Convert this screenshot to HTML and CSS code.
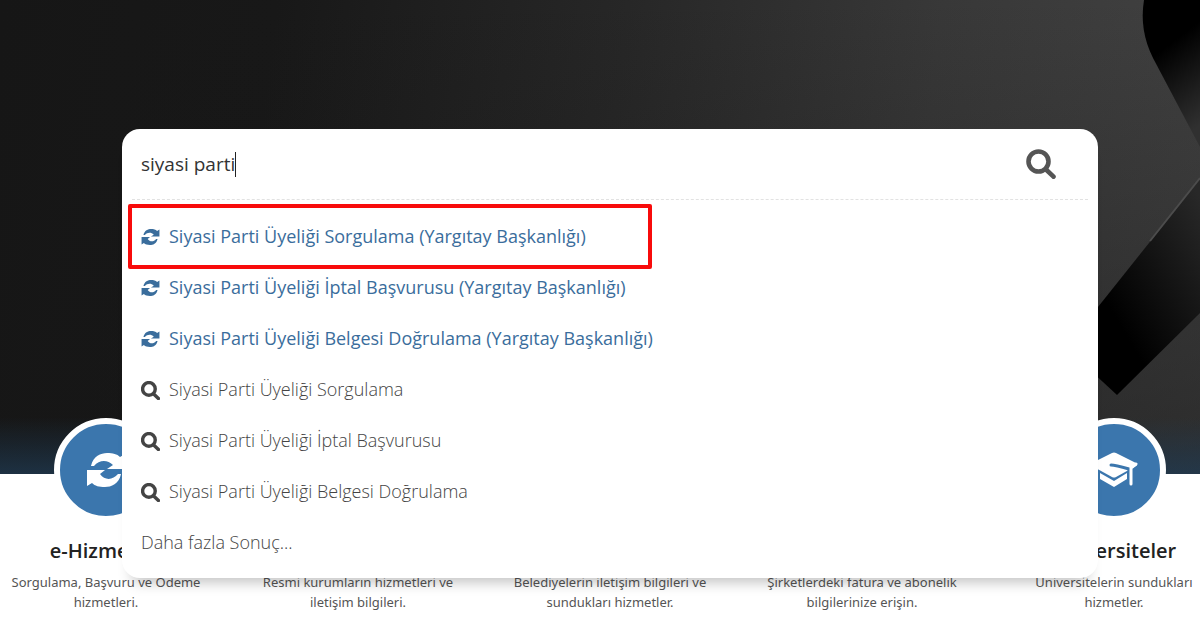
FILE: index.html
```
<!DOCTYPE html>
<html lang="tr">
<head>
<meta charset="UTF-8">
<meta name="viewport" content="width=device-width, initial-scale=1.0">
<title>e-Devlet Arama</title>
<link rel="stylesheet" href="styles.css">
</head>
<body>

<svg class="sprite" aria-hidden="true">
    <symbol id="refresh" viewBox="0 0 38 34">
        <path d="M4 13 C6 3 14 0 20 0 C26 0 30 1 33 4 L38 1 L38 16 L20 16 L26 12 C20 6 12 7 7 13 Z"/>
        <path d="M34 21 C32 31 24 34 18 34 C12 34 8 33 5 30 L0 33 L0 17 L18 17 L13 21 C18 28 26 27 31 21 Z"/>
    </symbol>
    <symbol id="search" viewBox="0 0 30 30">
        <circle cx="12.5" cy="12.5" r="10" fill="none" stroke="currentColor"/>
        <path d="M20 20.5 L27.5 27.7" fill="none" stroke="currentColor" stroke-linecap="round"/>
    </symbol>
    <symbol id="cap" viewBox="0 0 48 36">
        <path d="M22 1 Q24 0 26 1 L46 11 Q48 13 46 14 L26 25 Q24 26 22 25 L2 14 Q0 13 2 11 Z"/>
        <path d="M21 13 Q25 13 39 17 V24" fill="none" stroke="#3b76ad" stroke-width="3" stroke-linecap="round"/>
        <path d="M46 12 L41 16 V32" fill="none" stroke="currentColor" stroke-width="3" stroke-linecap="round"/>
        <path d="M10 21 L24 29 L37 21 V27 L24 35 L10 27 Z"/>
    </symbol>
</svg>

<header class="hero">
    <svg class="ribbon" viewBox="0 0 110 474" aria-hidden="true">
        <defs>
            <linearGradient id="upper" x1="0.2" y1="0" x2="0.5" y2="1">
                <stop offset="0.35" stop-color="#000"/>
                <stop offset="1" stop-color="#303030"/>
            </linearGradient>
            <linearGradient id="lower" x1="0.9" y1="0" x2="0.3" y2="0.7">
                <stop offset="0" stop-color="#282828"/>
                <stop offset="0.4" stop-color="#181818"/>
                <stop offset="1" stop-color="#000"/>
            </linearGradient>
        </defs>
        <path d="M54 0 Q49 30 63 58 L110 147 V0 Z" fill="url(#upper)"/>
        <path d="M110 179 L0 317 V370 L27 395 L110 313 Z" fill="url(#lower)"/>
        <path d="M110 178 L60 241" stroke="#4c4c4c" stroke-width="2"/>
    </svg>
</header>

<main>
    <section class="search-panel">
        <form class="search-bar">
            <input type="text" class="search-input" aria-label="Arama" value="siyasi parti" autofocus>
            <span class="caret"></span>
            <button type="button" class="search-btn" aria-label="Ara"><svg><use href="#search"/></svg></button>
        </form>
        <ul class="results">
            <li class="marked"><a href="#" class="service"><svg><use href="#refresh"/></svg>Siyasi Parti Üyeliği Sorgulama (Yargıtay Başkanlığı)</a></li>
            <li><a href="#" class="service"><svg><use href="#refresh"/></svg>Siyasi Parti Üyeliği İptal Başvurusu (Yargıtay Başkanlığı)</a></li>
            <li><a href="#" class="service"><svg><use href="#refresh"/></svg>Siyasi Parti Üyeliği Belgesi Doğrulama (Yargıtay Başkanlığı)</a></li>
            <li><a href="#"><svg><use href="#search"/></svg>Siyasi Parti Üyeliği Sorgulama</a></li>
            <li><a href="#"><svg><use href="#search"/></svg>Siyasi Parti Üyeliği İptal Başvurusu</a></li>
            <li><a href="#"><svg><use href="#search"/></svg>Siyasi Parti Üyeliği Belgesi Doğrulama</a></li>
            <li><a href="#">Daha fazla Sonuç...</a></li>
        </ul>
    </section>

    <section class="services">
        <article class="card">
            <div class="badge"><svg class="sync"><use href="#refresh"/></svg></div>
            <h2>e-Hizmetler</h2>
            <p>Sorgulama, Başvuru ve Ödeme hizmetleri.</p>
        </article>
        <article class="card">
            <div class="badge"></div>
            <h2>Kurumlar</h2>
            <p>Resmi kurumların hizmetleri ve iletişim bilgileri.</p>
        </article>
        <article class="card">
            <div class="badge"></div>
            <h2>Belediyeler</h2>
            <p>Belediyelerin iletişim bilgileri ve sundukları hizmetler.</p>
        </article>
        <article class="card">
            <div class="badge"></div>
            <h2>Firmalar</h2>
            <p>Şirketlerdeki fatura ve abonelik bilgilerinize erişin.</p>
        </article>
        <article class="card">
            <div class="badge"><svg class="cap"><use href="#cap"/></svg></div>
            <h2>Üniversiteler</h2>
            <p>Üniversitelerin sundukları hizmetler.</p>
        </article>
    </section>
</main>

</body>
</html>
```
FILE: styles.css
```
*{
    box-sizing:border-box;
}

body{
    margin:0;
    font-family:"Open Sans","Noto Sans",sans-serif;
    background:#fff;
    color:#444;
    overflow:hidden;
}

.sprite{
    position:absolute;
    width:0;
    height:0;
}

svg{
    fill:currentColor;
}

.hero{
    display:flex;
    justify-content:flex-end;
    height:474px;
    background:
        linear-gradient(to bottom,rgba(32,54,77,0) 88%,rgba(32,60,85,.7) 100%),
        linear-gradient(to bottom,rgba(22,22,22,0) 0%,rgba(22,22,22,.5) 100%),
        linear-gradient(97deg,#161616 0%,#181818 22%,#272727 50%,#383838 75%,#424242 100%);
}

.ribbon{
    width:110px;
    height:474px;
}

main{
    position:relative;
}

/* the open search box lies over the hero and the cards */
.search-panel{
    position:absolute;
    z-index:2;
    left:122px;
    right:102px;
    bottom:calc(100% - 104px);
    background:#fff;
    border-radius:18px;
    box-shadow:0 14px 14px -10px rgba(0,0,0,.25);
}

.search-bar{
    display:flex;
    align-items:center;
    height:71px;
    margin:0 10px;
    padding:0 32px 0 9px;
    border-bottom:1px dashed #e2e2e2;
}

.search-input{
    field-sizing:content;
    padding:0;
    border:none;
    outline:none;
    background:none;
    font:19px "Open Sans","Noto Sans",sans-serif;
    color:#333;
    caret-color:transparent;
}

.caret{
    width:1px;
    height:25px;
    background:#222;
}

.search-btn{
    margin-left:auto;
    padding:0;
    border:none;
    background:none;
    color:#555;
    cursor:pointer;
}

.search-btn svg{
    display:block;
    width:30px;
    height:30px;
    stroke-width:4.6px;
}

.results{
    margin:0;
    padding:10px 6px 11px;
    list-style:none;
}

.results li{
    position:relative;
}

.results a{
    display:flex;
    align-items:center;
    gap:9px;
    height:51px;
    padding:0 13px;
    font-size:18px;
    font-weight:300;
    color:#444;
    text-decoration:none;
}

.results a.service{
    font-weight:400;
    color:#3a6d9c;
}

.results svg{
    width:19px;
    height:19px;
    margin-top:3px;
    stroke-width:5.4px;
}

.results .service svg{
    height:16px;
}

.marked::after{
    content:"";
    box-sizing:border-box;
    position:absolute;
    top:-6px;
    left:0;
    width:524px;
    height:65px;
    border:4px solid #f80b0b;
    border-radius:2px;
}

.services{
    display:flex;
    margin:0 -40px 0 -20px;
}

.card{
    flex:1;
    display:flex;
    flex-direction:column;
    align-items:center;
    margin-top:-56px;
    padding:0 24px;
    text-align:center;
}

.badge{
    display:flex;
    align-items:center;
    justify-content:center;
    width:104px;
    height:104px;
    border:6px solid #fff;
    border-radius:50%;
    background:#3b76ad;
    color:#fff;
}

.sync{
    width:38px;
    height:34px;
}

.cap{
    width:48px;
    height:36px;
}

.card h2{
    margin:16px 0 8px;
    font-size:20px;
    line-height:26px;
    font-weight:600;
    color:#222;
}

.card p{
    margin:0;
    font-family:"Noto Sans","Open Sans",sans-serif;
    font-size:13px;
    line-height:20px;
    color:#555;
}
```
